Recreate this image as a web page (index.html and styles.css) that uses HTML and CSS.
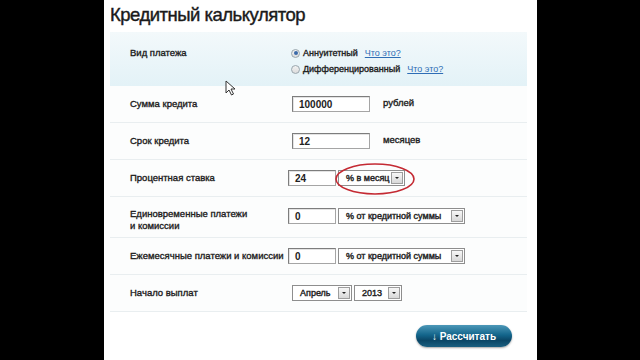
FILE: index.html
```html
<!DOCTYPE html>
<html>
<head>
  <meta charset="UTF-8">
  <title>Кредитный калькулятор</title>
  <link rel="stylesheet" href="styles.css">
</head>
<body>
  <div class="screen">
    <div class="page">
      <h1 class="title">Кредитный калькулятор</h1>

      <div class="form">
        <div class="row row-type">
          <div class="label">Вид платежа</div>
          <div class="field radios">
            <div class="radio"><span class="dot checked"></span>Аннуитетный <a class="help" href="#">Что это?</a></div>
            <div class="radio"><span class="dot"></span>Дифференцированный <a class="help" href="#">Что это?</a></div>
          </div>
        </div>

        <div class="row">
          <div class="label">Сумма кредита</div>
          <div class="field shifted">
            <span class="input wide">100000</span>
            <span class="unit">рублей</span>
          </div>
        </div>

        <div class="row">
          <div class="label">Срок кредита</div>
          <div class="field shifted">
            <span class="input wide">12</span>
            <span class="unit">месяцев</span>
          </div>
        </div>

        <div class="row">
          <div class="label">Процентная ставка</div>
          <div class="field">
            <span class="input short">24</span>
            <span class="select rate">% в месяц<span class="arrow"></span></span>
          </div>
        </div>

        <div class="row row-two">
          <div class="label">Единовременные платежи<br>и комиссии</div>
          <div class="field">
            <span class="input short">0</span>
            <span class="select sum">% от кредитной суммы<span class="arrow"></span></span>
          </div>
        </div>

        <div class="row">
          <div class="label">Ежемесячные платежи и комиссии</div>
          <div class="field">
            <span class="input short">0</span>
            <span class="select sum">% от кредитной суммы<span class="arrow"></span></span>
          </div>
        </div>

        <div class="row">
          <div class="label">Начало выплат</div>
          <div class="field shifted">
            <span class="select month">Апрель<span class="arrow"></span></span>
            <span class="select year">2013<span class="arrow"></span></span>
          </div>
        </div>
      </div>

      <div class="actions">
        <button class="calc">↓ Рассчитать</button>
      </div>
    </div>

    <!-- red marker round the rate select -->
    <svg class="marker" width="84" height="36" viewBox="0 0 84 36">
      <ellipse cx="42" cy="18" rx="39" ry="15" fill="none" stroke="#c42a33" stroke-width="1.6"/>
    </svg>

    <!-- mouse pointer -->
    <svg class="cursor" width="12" height="16" viewBox="0 0 12 16">
      <path d="M1 1 L1 13 L4 10 L6.5 15 L8.5 14 L6 9 L10 9 Z" fill="#fff" stroke="#333" stroke-width="1"/>
    </svg>
  </div>
</body>
</html>
```

FILE: styles.css
```css
body {
  margin: 0;
  background-color: #000;
  font-family: "Liberation Sans", Arial, sans-serif;
}

.screen {
  position: relative;
  width: 640px;
  height: 360px;
  overflow: hidden;
}

.page {
  margin-left: 104px;
  width: 433px;
  height: 360px;
  padding: 3px 0 0 6px;
  box-sizing: border-box;
  background-color: #fff;
}

.title {
  margin: 0 0 5px;
  font-size: 18.5px;
  line-height: 24px;
  letter-spacing: -0.5px;
  font-weight: normal;
  color: #1a1a1a;
  -webkit-text-stroke: 0.4px #1a1a1a;
}

.form {
  margin-right: 10px;
  background-color: #fcfdfd;
}

.row {
  display: flex;
  align-items: flex-start;
  padding: 10px 0 10px 20px;
  border-bottom: 1px solid #e9eef0;
}

.row-type {
  padding: 13px 0 9px 20px;
  background: linear-gradient(to bottom, #f3f9fb, #e3f2f7);
  border-bottom: none;
}

.row-two {
  padding: 11px 0 5px 20px;
}

.label {
  width: 158px;
  flex-shrink: 0;
  font-size: 9.5px;
  line-height: 16px;
  color: #1c1c1c;
  -webkit-text-stroke: 0.35px #1c1c1c;
}

.row-two .label {
  line-height: 12px;
}

.field {
  display: flex;
  align-items: center;
  gap: 2px;
  font-size: 9.5px;
  color: #1c1c1c;
  white-space: nowrap;
}

.field.shifted {
  padding-left: 4px;
}

.radios {
  flex-direction: column;
  align-items: flex-start;
  gap: 0;
  padding-left: 3px;
}

.radio {
  display: flex;
  align-items: center;
  font-size: 9px;
  line-height: 16px;
  -webkit-text-stroke: 0.35px #1c1c1c;
}

.dot {
  width: 7px;
  height: 7px;
  margin-right: 3px;
  border: 1px solid #9aa6ad;
  border-radius: 50%;
  background: linear-gradient(#f2f2f2, #dcdcdc);
  position: relative;
}

.dot.checked::after {
  content: "";
  position: absolute;
  left: 1.5px;
  top: 1.5px;
  width: 4px;
  height: 4px;
  border-radius: 50%;
  background-color: #3b6aa8;
}

.help {
  margin-left: 7px;
  color: #2f6db5;
  -webkit-text-stroke: 0;
}

.input {
  display: inline-block;
  height: 16px;
  box-sizing: border-box;
  padding: 0 6px;
  border: 1px solid #a5a5a5;
  border-top-color: #7d7d7d;
  border-left-color: #7d7d7d;
  box-shadow: inset 1px 1px 0 #e3e3e3;
  background-color: #fff;
  font-size: 10px;
  line-height: 15px;
  font-weight: bold;
  color: #222;
}

.input.wide {
  width: 78px;
}

.input.short {
  width: 48px;
}

.unit {
  margin-left: 11px;
  margin-top: -3px;
  -webkit-text-stroke: 0.35px #1c1c1c;
}

.select {
  display: inline-flex;
  align-items: center;
  justify-content: space-between;
  height: 16px;
  box-sizing: border-box;
  padding: 0 1px 0 7px;
  border: 1px solid #8e8e8e;
  background-color: #fff;
  font-size: 9px;
  color: #222;
  -webkit-text-stroke: 0.4px #222;
}

.select.rate {
  width: 67px;
}

.select.sum {
  width: 127px;
}

.select.month {
  width: 60px;
}

.select.year {
  width: 48px;
}

.arrow {
  position: relative;
  flex-shrink: 0;
  width: 10px;
  height: 10px;
  border: 1px solid #9d9d9d;
  background: linear-gradient(#f7f7f7, #d8d8d8);
  -webkit-text-stroke: 0;
}

.arrow::after {
  content: "";
  position: absolute;
  left: 3px;
  top: 4px;
  border-left: 2px solid transparent;
  border-right: 2px solid transparent;
  border-top: 2px solid #222;
}

.actions {
  display: flex;
  justify-content: flex-end;
  padding: 13px 25px 0 0;
}

.calc {
  width: 96px;
  height: 22px;
  border: none;
  border-radius: 11px;
  background: linear-gradient(to bottom, #4d98b8 0%, #13658b 45%, #0a4666 70%, #1a5f80 100%);
  box-shadow: 0 1px 2px rgba(0, 0, 0, 0.35);
  font-family: "Liberation Sans", Arial, sans-serif;
  font-size: 10px;
  font-weight: bold;
  color: #fff;
  cursor: pointer;
}

.marker {
  position: absolute;
  left: 333px;
  top: 161px;
}

.cursor {
  position: absolute;
  left: 225px;
  top: 80px;
}
```
